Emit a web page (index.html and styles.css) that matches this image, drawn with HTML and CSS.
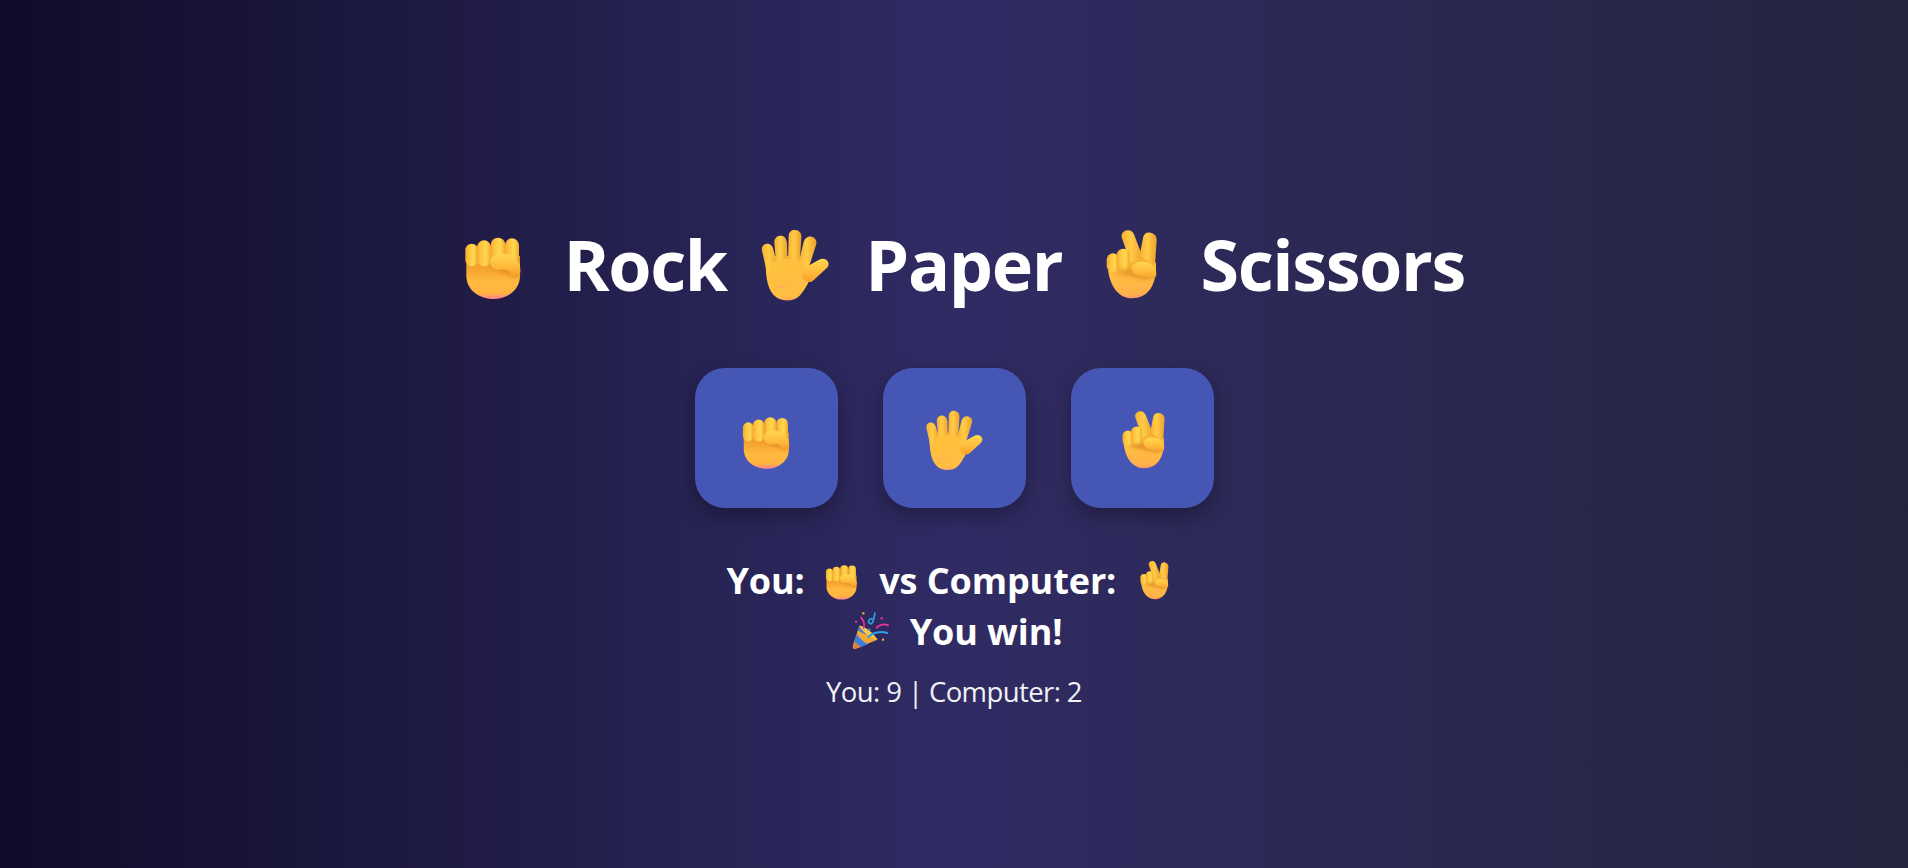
FILE: index.html
```html
<!DOCTYPE html>
<html lang="en">
<head>
<meta charset="utf-8">
<title>Rock Paper Scissors</title>
<link rel="stylesheet" href="styles.css">
</head>
<body>
<svg class="defs" aria-hidden="true" width="0" height="0">
  <defs>
    <filter id="soft" x="-30%" y="-30%" width="160%" height="160%"><feGaussianBlur stdDeviation="6"/></filter>
    <linearGradient id="palm" x1="0" y1="0" x2="0" y2="1">
      <stop offset="0" stop-color="#E8912A"/>
      <stop offset=".32" stop-color="#F7A531"/>
      <stop offset=".6" stop-color="#FFBA3E"/>
      <stop offset=".86" stop-color="#FFB340"/>
      <stop offset="1" stop-color="#FF8193"/>
    </linearGradient>
    <linearGradient id="handpalm" x1="0" y1="0" x2="0" y2="1">
      <stop offset="0" stop-color="#FFC13C"/>
      <stop offset=".92" stop-color="#FFBE42"/>
      <stop offset="1" stop-color="#FF9A70"/>
    </linearGradient>
    <linearGradient id="peacepalm" x1="0" y1="0" x2="0" y2="1">
      <stop offset="0" stop-color="#F6A52F"/>
      <stop offset=".45" stop-color="#FFBE3F"/>
      <stop offset=".9" stop-color="#FFB24A"/>
      <stop offset="1" stop-color="#FF9868"/>
    </linearGradient>
    <linearGradient id="finger" x1="0" y1="0" x2="1" y2="0">
      <stop offset="0" stop-color="#F6A92E"/>
      <stop offset=".3" stop-color="#FFC63F"/>
      <stop offset=".65" stop-color="#FFD850"/>
      <stop offset="1" stop-color="#F3A82F"/>
    </linearGradient>
    <linearGradient id="handfinger" x1="0" y1="0" x2="1" y2="0">
      <stop offset="0" stop-color="#F8B233"/>
      <stop offset=".45" stop-color="#FFCC47"/>
      <stop offset="1" stop-color="#EEA02C"/>
    </linearGradient>
    <linearGradient id="thumb" x1="0" y1="0" x2="0" y2="1">
      <stop offset="0" stop-color="#FFD84F"/>
      <stop offset=".55" stop-color="#FFBD3C"/>
      <stop offset="1" stop-color="#F79F2C"/>
    </linearGradient>

    <symbol id="e-rock" viewBox="-9 6 300 300">
      <path fill="url(#palm)" d="M58 105 V165 C58 205 95 234 139 234 C183 234 219 205 219 165 V105 Z"/>
      <rect x="55" y="68" width="38" height="68" rx="19" fill="url(#finger)"/>
      <rect x="90" y="58" width="42" height="78" rx="21" fill="url(#finger)"/>
      <rect x="131" y="50" width="44" height="78" rx="22" fill="url(#finger)"/>
      <rect x="174" y="52" width="42" height="76" rx="21" fill="url(#finger)"/>
      <path fill="#D9801F" opacity=".65" filter="url(#soft)" d="M128 135 C150 155 180 150 205 172 L222 150 L160 120 Z"/>
      <path fill="url(#thumb)" d="M130 124 C130 107 145 98 161 98 C192 98 220 112 220 148 C220 160 211 166 201 164 C190 162 189 151 180 147 C172 144 164 148 152 147 C140 146 130 137 130 124 Z"/>
    </symbol>

    <symbol id="e-paper" viewBox="-15 6 300 300">
      <path fill="url(#handpalm)" d="M44 125 C44 170 50 210 75 228 C90 240 125 245 145 225 C165 205 178 170 190 150 L145 105 L60 105 Z"/>
      <path fill="url(#handfinger)" d="M33 89 C30 72 44 66 54 69 C64 72 67 82 70 96 L80 140 L47 150 Z"/>
      <path fill="url(#handfinger)" d="M70 64 C70 48 82 43 92 44 C103 46 107 56 108 68 L110 135 L76 135 Z"/>
      <path fill="url(#handfinger)" d="M113 45 C113 31 124 26 133 27 C145 28 152 36 151 50 L146 130 L111 130 Z"/>
      <path fill="url(#handfinger)" d="M158 62 C162 50 172 44 183 47 C194 51 199 60 195 72 L174 138 L143 126 Z"/>
      <path fill="url(#handpalm)" d="M62 125 C90 110 130 110 165 130 L170 190 L75 200 Z"/>
      <path fill="url(#thumb)" d="M172 134 L203 117 C214 110 226 113 231 122 C235 130 232 138 224 144 L186 179 C176 188 150 180 152 160 C153 148 162 140 172 134 Z"/>
    </symbol>

    <symbol id="e-scissors" viewBox="-36 6 300 300">
      <path fill="url(#peacepalm)" d="M44 125 C44 190 75 232 117 232 C160 232 192 200 189 125 L130 90 Z"/>
      <path fill="url(#handfinger)" d="M86 48 C84 34 97 27 108 28 C118 30 123 38 126 48 L150 110 L112 125 Z"/>
      <path fill="url(#handfinger)" d="M150 50 C152 38 162 33 172 35 C184 37 192 46 191 58 L186 132 L140 105 Z"/>
      <rect x="41" y="97" width="38" height="56" rx="19" fill="url(#finger)"/>
      <rect x="71" y="83" width="40" height="68" rx="20" fill="url(#finger)"/>
      <path fill="#D9801F" opacity=".6" filter="url(#soft)" d="M60 150 C90 165 130 170 170 178 L188 150 L120 140 Z"/>
      <path fill="url(#thumb)" d="M117 143 C117 129 130 122 146 122 C170 122 190 133 190 158 C190 171 179 177 169 171 C158 165 150 167 135 163 C124 160 117 153 117 143 Z"/>
    </symbol>

    <symbol id="e-party" viewBox="420 180 144 144">
      <path fill="#F0A838" d="M437 300 C431 300 430 294 432 288 L451 230 C462 232 500 262 505 272 Z"/>
      <path fill="#3F7FD8" d="M436 277 L443 255 C452 268 465 280 477 286 L456 294 C448 290 441 284 436 277 Z"/>
      <path fill="#3F7FD8" d="M447 243 L451 232 C460 238 470 246 478 256 C466 256 454 250 447 243 Z"/>
      <path fill="#E0803A" d="M432 288 L436 277 C441 284 448 290 456 294 L438 300 C433 300 431 295 432 288 Z"/>
      <path fill="#F8C843" d="M451 230 C465 228 500 258 505 272 C490 270 455 245 451 230 Z"/>
      <path fill="none" stroke="#2F9FE8" stroke-width="6" stroke-linecap="round" d="M478 264 C490 250 515 246 535 252"/>
      <path fill="none" stroke="#F0309A" stroke-width="6" stroke-linecap="round" d="M503 236 C512 226 526 224 537 229"/>
      <path fill="none" stroke="#2F9FE8" stroke-width="5" stroke-linecap="round" d="M490 210 C482 208 476 216 480 222 C486 228 492 222 493 214 L498 192"/>
      <path fill="none" stroke="#F0309A" stroke-width="5" stroke-linecap="round" d="M456 205 C464 214 468 226 464 238"/>
      <circle cx="441" cy="218" r="3.5" fill="#F0309A"/>
      <circle cx="463" cy="193" r="3.5" fill="#F8B43C"/>
      <circle cx="518" cy="208" r="3.5" fill="#F0309A"/>
      <circle cx="522" cy="272" r="3.5" fill="#F8B43C"/>
      <circle cx="481" cy="242" r="3.5" fill="#2F9FE8"/>
    </symbol>
  </defs>
</svg>

<main class="game">
  <h1 class="title"><svg class="emoji emoji-title"><use href="#e-rock"/></svg> Rock <svg class="emoji emoji-title"><use href="#e-paper"/></svg> Paper <svg class="emoji emoji-title"><use href="#e-scissors"/></svg> Scissors</h1>

  <div class="choices">
    <button class="choice" type="button" aria-label="Rock"><svg class="emoji emoji-btn"><use href="#e-rock"/></svg></button>
    <button class="choice" type="button" aria-label="Paper"><svg class="emoji emoji-btn"><use href="#e-paper"/></svg></button>
    <button class="choice" type="button" aria-label="Scissors"><svg class="emoji emoji-btn"><use href="#e-scissors"/></svg></button>
  </div>

  <p class="result">You: <svg class="emoji emoji-line"><use href="#e-rock"/></svg> vs Computer: <svg class="emoji emoji-line"><use href="#e-scissors"/></svg></p>
  <p class="result result-win"><svg class="emoji emoji-party"><use href="#e-party"/></svg> You win!</p>
  <p class="score">You: 9 | Computer: 2</p>
</main>
</body>
</html>
```
FILE: styles.css
```css
* {
  box-sizing: border-box;
}

html,
body {
  margin: 0;
  height: 100%;
}

body {
  background: linear-gradient(to right, #0f0c29, #302b63, #24243e);
  color: #fff;
  font-family: "Open Sans", "Noto Sans", sans-serif;
  overflow: hidden;
}

.defs {
  position: absolute;
  width: 0;
  height: 0;
}

.game {
  height: 100%;
  padding-top: 216px;
  display: flex;
  flex-direction: column;
  align-items: center;
  text-align: center;
}

.title {
  margin: 0 0 47px;
  height: 105px;
  padding-left: 1px;
  font-size: 70px;
  line-height: 96px;
  font-weight: 700;
  letter-spacing: -1.4px;
  word-spacing: 2.5px;
  white-space: nowrap;
}

.emoji {
  display: inline-block;
}

.emoji-title {
  width: 100px;
  height: 100px;
  vertical-align: -32px;
}

.choices {
  display: flex;
  justify-content: center;
  gap: 45px;
  margin-bottom: 47px;
}

.choice {
  width: 143px;
  height: 140px;
  padding: 18px 0 0 2px;
  border: 0;
  border-radius: 30px;
  background: #4656b4;
  box-shadow: 0 8px 20px rgba(0, 0, 0, 0.3);
  display: flex;
  align-items: center;
  justify-content: center;
}

.emoji-btn {
  width: 84px;
  height: 84px;
}

.result {
  margin: 0;
  height: 51px;
  font-size: 36px;
  line-height: 51px;
  font-weight: 700;
  letter-spacing: -0.1px;
  white-space: nowrap;
}

.result-win {
  padding-left: 3px;
}

.emoji-line {
  width: 56px;
  height: 56px;
  vertical-align: -19px;
}

.emoji-party {
  width: 48px;
  height: 48px;
  margin-right: 4px;
  vertical-align: -12px;
}

.score {
  margin: 16px 0 0;
  font-size: 27.5px;
  line-height: 38px;
  letter-spacing: -0.6px;
  color: #f1f1f6;
  white-space: nowrap;
}
```
